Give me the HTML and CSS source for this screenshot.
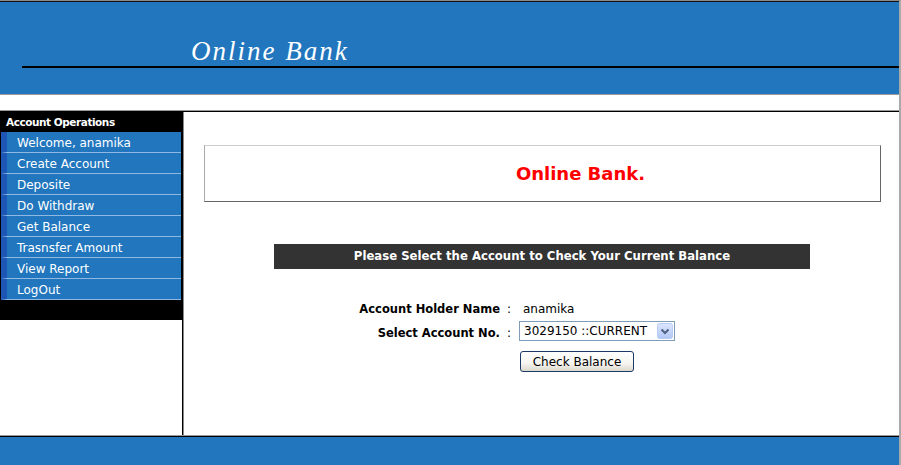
FILE: index.html
```html
<!DOCTYPE html>
<html>
<head>
<meta charset="utf-8">
<title>Online Bank</title>
<link rel="stylesheet" href="styles.css">
</head>
<body>
<div class="page">
  <div class="header">
    <div class="brand">Online Bank</div>
    <div class="rule"></div>
  </div>
  <div class="spacer"></div>
  <div class="content">
    <div class="sidebar">
      <div class="sidebox">
        <div class="side-title">Account Operations</div>
        <ul class="menu">
          <li>Welcome, anamika</li>
          <li>Create Account</li>
          <li>Deposite</li>
          <li>Do Withdraw</li>
          <li>Get Balance</li>
          <li>Trasnsfer Amount</li>
          <li>View Report</li>
          <li>LogOut</li>
        </ul>
      </div>
    </div>
    <div class="main">
      <div class="banner"><span class="banner-text">Online Bank.</span></div>
      <div class="bar">Please Select the Account to Check Your Current Balance</div>
      <div class="form">
        <div class="lbl r1">Account Holder Name</div>
        <div class="colon r1">:</div>
        <div class="val r1"><span class="name">anamika</span></div>
        <div class="lbl r2 low">Select Account No.</div>
        <div class="colon r2 low">:</div>
        <div class="val r2">
          <div class="select">
            <span class="sel-text">3029150 ::CURRENT</span>
            <svg class="sel-arrow" width="16" height="16" viewBox="0 0 16 16">
              <defs>
                <linearGradient id="ag" x1="0" y1="0" x2="0" y2="1">
                  <stop offset="0" stop-color="#dce6fd"/>
                  <stop offset="1" stop-color="#b2c7f6"/>
                </linearGradient>
              </defs>
              <rect x="0.5" y="0.5" width="15" height="15" rx="2" fill="url(#ag)" stroke="#b8cbf4"/>
              <path d="M4.5 6.5 L8 10 L11.5 6.5" fill="none" stroke="#4d6185" stroke-width="2"/>
            </svg>
          </div>
        </div>
        <div class="lbl r3"></div>
        <div class="colon r3"></div>
        <div class="val r3"><button class="btn" type="button">Check Balance</button></div>
      </div>
    </div>
  </div>
  <div class="footer"></div>
</div>
</body>
</html>
```
FILE: styles.css
```css
html, body {
  margin: 0;
  padding: 0;
  background: #ffffff;
}
body {
  font-family: "DejaVu Sans", Verdana, sans-serif;
  font-size: 12px;
  color: #000;
}
.page {
  width: 901px;
  box-sizing: border-box;
  border-top: 1px solid #8a8a8a;
  border-right: 2px solid #a9a9a9;
}
.header {
  height: 92px;
  background: #2176be;
  border-top: 1px solid #111;
  border-bottom: 1px solid #9a9a9a;
  display: flex;
  flex-direction: column;
}
.brand {
  margin-top: 34px;
  margin-left: 191px;
  height: 30px;
  line-height: 30px;
  font-family: "Liberation Serif", "Times New Roman", serif;
  font-style: italic;
  font-size: 27px;
  letter-spacing: 2px;
  color: #ffffff;
}
.rule {
  margin-left: 22px;
  height: 2px;
  background: #000;
}
.spacer {
  height: 15px;
}
.content {
  display: flex;
  height: 324px;
  border-top: 1px solid #9a9a9a;
  border-bottom: 1px solid #9a9a9a;
}
.sidebar {
  width: 182px;
  flex: none;
}
.sidebox {
  background: #000;
  padding-bottom: 20px;
}
.side-title {
  height: 20px;
  padding-top: 1px;
  line-height: 20px;
  padding-left: 6px;
  color: #fff;
  font-weight: bold;
  font-size: 10.5px;
  letter-spacing: -0.45px;
}
.menu {
  list-style: none;
  margin: 0 0 0 1px;
  padding: 0;
  width: 180px;
}
.menu li {
  height: 19px;
  padding-top: 1px;
  line-height: 20px;
  background: #2176be;
  border-left: 6px solid #1d56b4;
  border-bottom: 1px solid #8fb9e2;
  padding-left: 10px;
  color: #ffffff;
  font-size: 12px;
}
.main {
  flex: 1;
  border-top: 1px solid #000;
  border-left: 1px solid #000;
  box-shadow: inset 1px 0 0 #8a8a8a;
  padding-left: 1px;
  display: flex;
  flex-direction: column;
}
.banner {
  margin: 33px 18px 0 20px;
  height: 55px;
  border: 1px solid;
  border-color: #cccccc #666666 #666666 #aaaaaa;
  display: flex;
  align-items: center;
  justify-content: center;
}
.banner-text {
  padding-left: 76px;
  color: #ff0000;
  font-weight: bold;
  font-size: 18px;
}
.bar {
  margin: 42px 0 0 90px;
  width: 536px;
  height: 25px;
  line-height: 25px;
  background: #333333;
  color: #ffffff;
  font-weight: bold;
  font-size: 11.7px;
  text-align: center;
}
.form {
  margin-top: 30px;
  display: grid;
  grid-template-columns: 316px 18px auto;
  grid-template-rows: 20px 20px 21px;
}
.lbl {
  text-align: right;
  font-weight: bold;
  font-size: 11.5px;
  line-height: 20px;
}
.colon {
  text-align: center;
  line-height: 20px;
}
.val {
  line-height: 20px;
}
.r2 {
  margin-top: 2px;
}
.low {
  padding-top: 2px;
}
.r3 {
  margin-top: 12px;
}
.name {
  padding-left: 5px;
}
.select {
  margin-left: 1px;
  width: 156px;
  height: 20px;
  box-sizing: border-box;
  border: 1px solid #7f9db9;
  display: flex;
  align-items: center;
  justify-content: space-between;
  padding: 0 1px 0 4px;
  background: #fff;
}
.sel-text {
  font-size: 12px;
  line-height: 18px;
}
.sel-arrow {
  display: block;
}
.btn {
  margin: 0 0 0 2px;
  width: 114px;
  height: 21px;
  padding: 0;
  font-family: "DejaVu Sans", Verdana, sans-serif;
  font-size: 12px;
  color: #000;
  border: 1px solid #1d3a66;
  border-radius: 3px;
  background: linear-gradient(#ffffff 0%, #f6f5f0 60%, #dcd8cc 100%);
  display: block;
}
.footer {
  height: 29px;
  background: #2176be;
  border-top: 1px solid #000;
}
```
